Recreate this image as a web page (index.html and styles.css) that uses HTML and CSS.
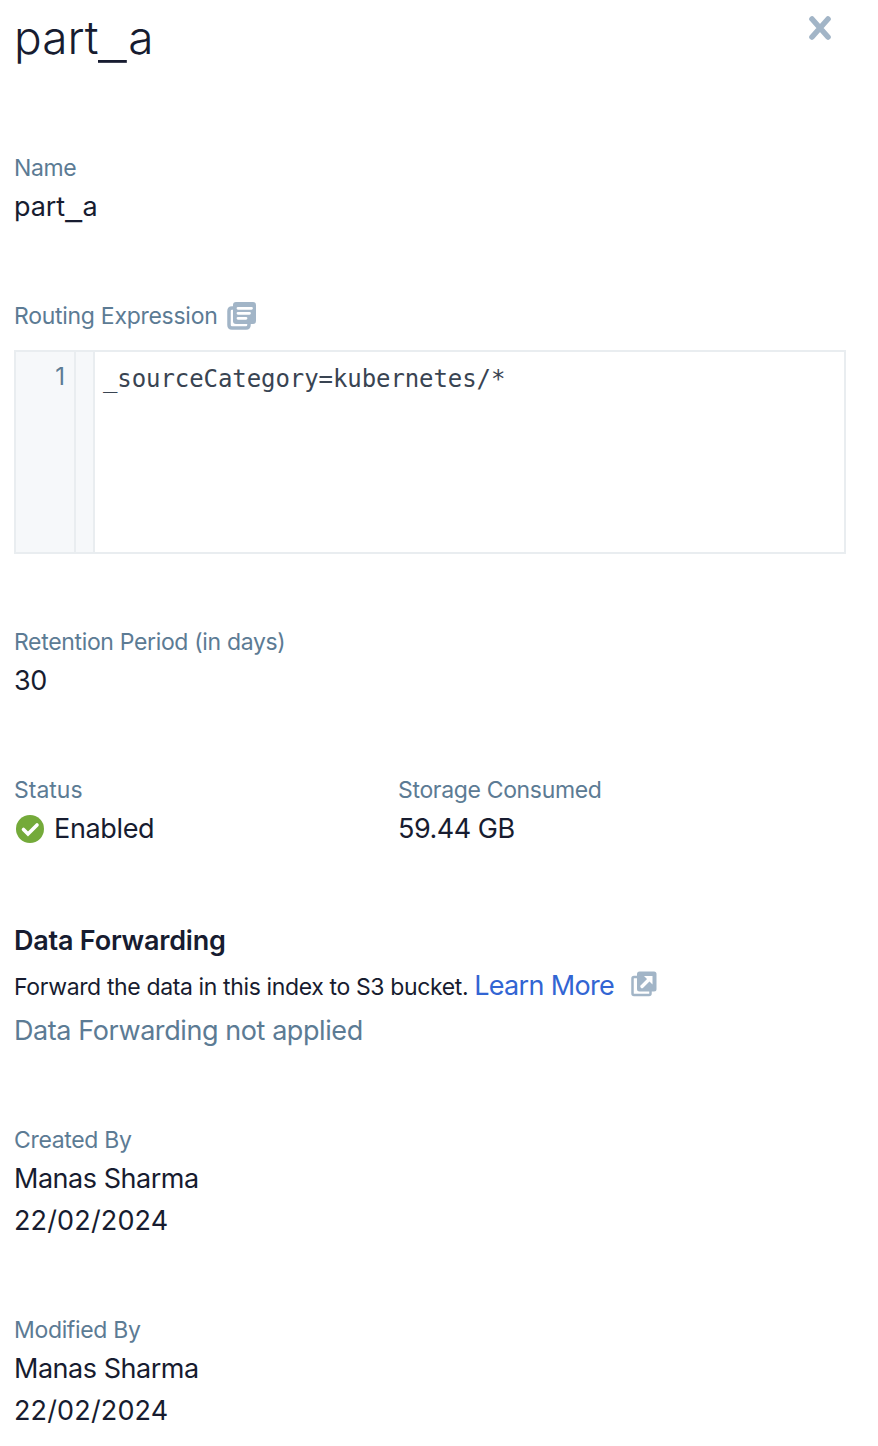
FILE: index.html
```html
<!DOCTYPE html>
<html lang="en">
<head>
<meta charset="utf-8">
<title>part_a</title>
<link rel="stylesheet" href="styles.css">
</head>
<body>
<main class="panel">
  <header class="panel-header">
    <h1 class="title">part<span class="underscore">_</span>a</h1>
    <button class="close" aria-label="Close"><svg width="24" height="26" viewBox="0 0 24 26"><path d="M4 4 20 22M20 4 4 22"/></svg></button>
  </header>
  <section class="field name">
    <div class="label">Name</div>
    <div class="value">part<span class="underscore">_</span>a</div>
  </section>
  <section class="field routing">
    <div class="label with-icon"><span>Routing Expression</span>
      <svg class="icon" width="30" height="30" viewBox="0 0 30 30"><path class="line" d="M7 7H5Q2 7 2 10V24Q2 27 5 27H19Q22 27 22 24V22"/><rect class="solid" x="6" y="1" width="23" height="22" rx="3"/><path class="cut" d="M11 7.300H24.500M11 12.300H22.500M11 17.300H19"/></svg>
    </div>
    <div class="editor">
      <div class="gutter">1</div>
      <div class="fold"></div>
      <code class="code">_sourceCategory=kubernetes/*</code>
    </div>
  </section>
  <section class="field retention">
    <div class="label">Retention Period (in days)</div>
    <div class="value">30</div>
  </section>
  <div class="columns">
    <section class="field">
      <div class="label wide">Status</div>
      <div class="value status"><svg width="28" height="28" viewBox="0 0 28 28"><circle cx="14" cy="14" r="14"/><path d="M7.500 14.500 12 19 21 10"/></svg><span>Enabled</span></div>
    </section>
    <section class="field">
      <div class="label">Storage Consumed</div>
      <div class="value">59.44 GB</div>
    </section>
  </div>
  <section class="forwarding">
    <h2 class="heading">Data Forwarding</h2>
    <p class="description"><span>Forward the data in this index to S3 bucket.</span> <a class="link">Learn More</a>
      <svg class="icon external" width="26" height="26" viewBox="0 0 26 26"><path class="line thin" d="M6 6H3Q1.500 6 1.500 7.500V22.500Q1.500 24 3 24H18Q19.500 24 19.500 22.500V20"/><rect class="solid" x="6" y="0.500" width="19.500" height="20" rx="2.500"/><path class="cut arrow-stem" d="M11 15.500 18 8.500"/><path class="arrow" d="M13 5H21.500V13.500Z"/></svg>
    </p>
    <p class="value muted">Data Forwarding not applied</p>
  </section>
  <section class="field created">
    <div class="label">Created By</div>
    <div class="value">Manas Sharma</div>
    <div class="value date">22/02/2024</div>
  </section>
  <section class="field modified">
    <div class="label">Modified By</div>
    <div class="value">Manas Sharma</div>
    <div class="value date">22/02/2024</div>
  </section>
</main>
</body>
</html>
```
FILE: styles.css
```css
* { box-sizing: border-box; }
body { margin: 0; background: #fff; color: #171c30; font-family: Inter, "Liberation Sans", sans-serif; }
h1, h2, p { margin: 0; font-weight: 400; }
.panel { width: 878px; height: 1446px; padding: 0 32px 0 14px; }
.panel-header { display: flex; justify-content: space-between; height: 150px; }
.title { font-size: 46px; font-weight: 300; line-height: 75px; }
/* Wide, low underscore used in index names */
.underscore { display: inline-block; width: 0.65em; transform: translateY(0.13em) scaleX(1.4); transform-origin: left; }
.close { width: 24px; height: 26px; margin: 15px 14px 0 0; padding: 0; border: 0; background: none; }
.close svg { display: block; fill: none; stroke: #a2b5c7; stroke-width: 5.6; stroke-linecap: round; }
.label { height: 36px; line-height: 36px; font-size: 23px; letter-spacing: -0.34px; color: #5c7b94; white-space: nowrap; }
.wide { letter-spacing: 0; }
.value { height: 42px; line-height: 42px; font-size: 27px; letter-spacing: -0.48px; white-space: nowrap; }
.date { letter-spacing: 0.15px; }
.name { height: 148px; }
.name .value { letter-spacing: -0.1px; }
.routing { height: 326px; }
.with-icon { display: flex; gap: 10px; align-items: center; height: 36px; margin-bottom: 16px; letter-spacing: -0.28px; }
.icon { flex: none; }
.line { fill: none; stroke: #a2b5c7; stroke-width: 3.5; }
.thin { stroke-width: 2.5; }
.solid { fill: #a2b5c7; }
.cut { fill: none; stroke: #fff; stroke-width: 2.8; stroke-linecap: round; }
.arrow-stem { stroke-width: 3.4; }
.arrow { fill: #fff; }
.editor { display: flex; height: 204px; border: 2px solid #e9edf0; }
.gutter { width: 60px; flex: none; border-right: 2px solid #e9edf0; background: #f6f8fa; padding: 7px 9px 0 0; text-align: right; font-size: 24px; line-height: 36px; color: #5c7b94; }
.fold { width: 19px; border-right: 2px solid #e9edf0; background: #f6f8fa; }
.code { padding: 9px 0 0 8px; font-family: "DejaVu Sans Mono", monospace; font-size: 24px; line-height: 36px; letter-spacing: -0.08px; color: #394452; }
.retention { height: 148px; }
.columns { display: grid; grid-template-columns: 384px 1fr; height: 148px; }
.status { display: flex; align-items: center; gap: 10px; padding-left: 2px; letter-spacing: -0.35px; }
.status circle { fill: #74aa3a; }
.status path { fill: none; stroke: #fff; stroke-width: 3.6; stroke-linecap: round; }
.forwarding { height: 202px; }
.heading { font-size: 27px; font-weight: 600; line-height: 42px; letter-spacing: -0.22px; }
.description { display: flex; align-items: baseline; height: 48px; line-height: 48px; font-size: 23px; letter-spacing: -0.37px; white-space: nowrap; }
.link { margin-left: 6px; font-size: 27px; letter-spacing: -0.68px; color: #3265d3; }
.external { align-self: flex-start; margin: 9px 0 0 17px; }
.muted { letter-spacing: -0.42px; color: #5c7b94; }
.created { height: 190px; }
```
